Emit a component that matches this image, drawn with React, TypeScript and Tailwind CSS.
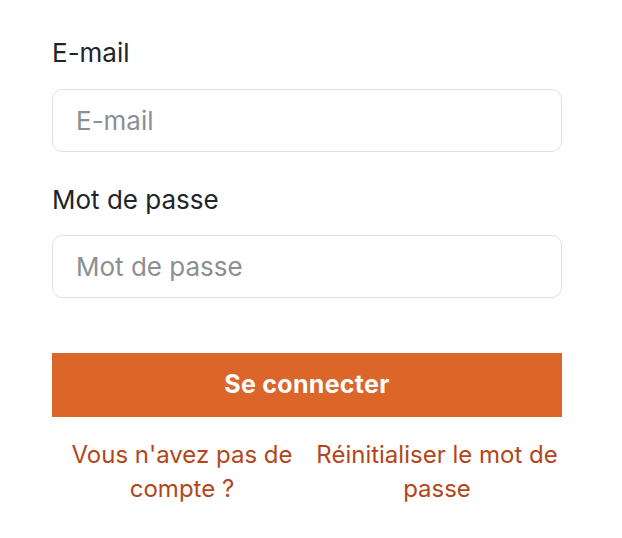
export default function App() {
  return (
    <div className="min-h-screen bg-white font-['Inter',sans-serif]">
      <form className="mx-[52px] w-[510px] pt-[36px]" onSubmit={(e) => e.preventDefault()}>
        <label className="block h-[34px] text-[26px] leading-[34px] text-[#212529] mb-[19px]">E-mail</label>
        <input
          type="email"
          placeholder="E-mail"
          className="block w-full h-[63px] rounded-[10px] border border-[#dee2e6] px-[23px] text-[26px] text-[#212529] placeholder:text-[#8c8f93] outline-none"
        />

        <label className="block h-[34px] mt-[31px] text-[26px] leading-[34px] text-[#212529] mb-[18px]">Mot de passe</label>
        <input
          type="password"
          placeholder="Mot de passe"
          className="block w-full h-[63px] rounded-[10px] border border-[#dee2e6] px-[23px] text-[26px] text-[#212529] placeholder:text-[#8c8f93] outline-none"
        />

        <button
          type="submit"
          className="block w-full h-[64px] mt-[55px] bg-[#dc6529] text-white text-[25px] font-bold tracking-[0.3px]"
        >
          Se connecter
        </button>

        <div className="grid grid-cols-2 mt-[21px] text-center text-[24px] leading-[34px] text-[#b4461c]">
          <a href="#" className="pl-[5px]">Vous n'avez pas de compte ?</a>
          <a href="#" className="pl-[5px]">Réinitialiser le mot de passe</a>
        </div>
      </form>
    </div>
  );
}
